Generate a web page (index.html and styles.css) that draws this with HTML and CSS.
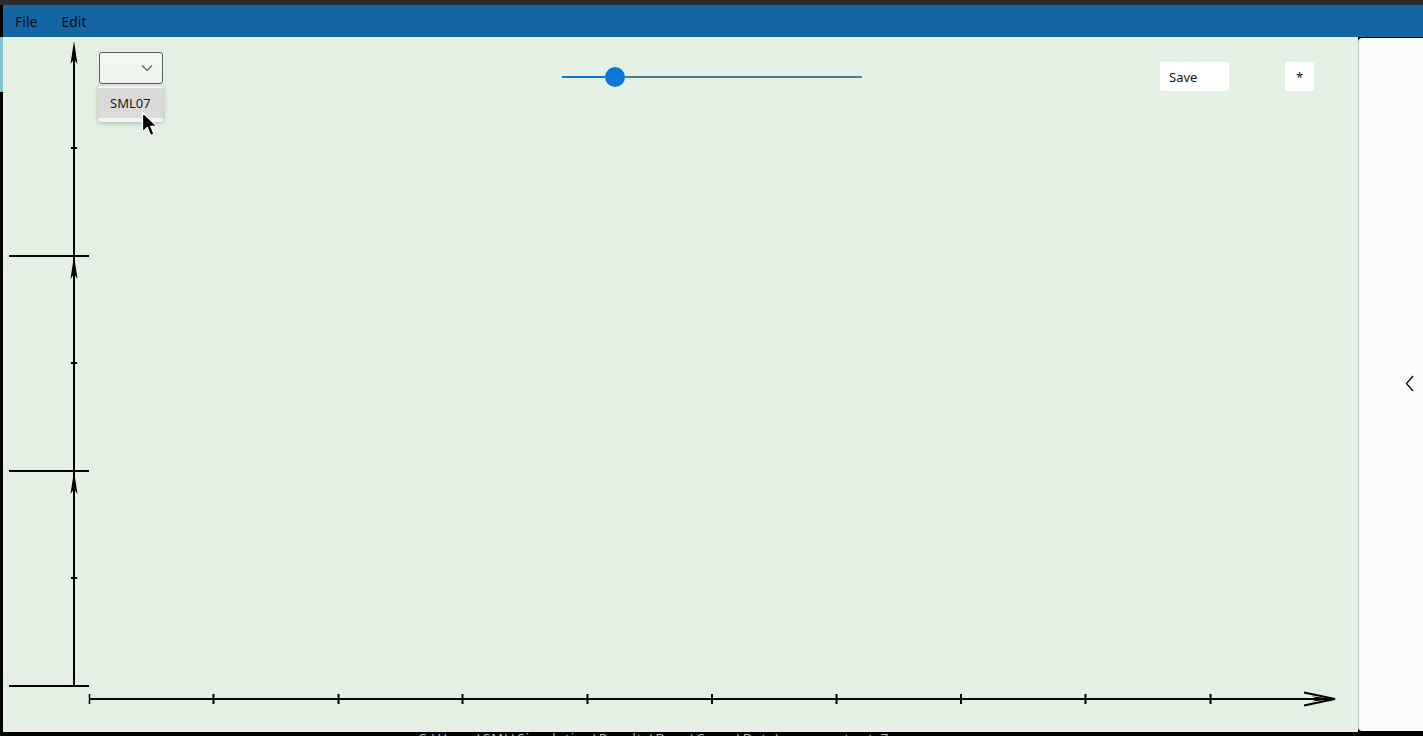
FILE: index.html
```html
<!DOCTYPE html>
<html>
<head>
<meta charset="utf-8">
<link rel="stylesheet" href="styles.css">
</head>
<body>
<div class="topbar"></div>
<div class="menubar">
  <span class="menu-item">File</span>
  <span class="menu-item">Edit</span>
</div>
<div class="main">
  <div class="leftstrip"><div class="leftstrip-hl"></div></div>
  <div class="canvas">
    <svg class="axes" width="1355" height="695" viewBox="3 37 1355 695">
      <g stroke="#000" fill="none">
        <line x1="74" y1="50" x2="74" y2="686" stroke-width="2"/>
        <line x1="9" y1="256" x2="89" y2="256" stroke-width="2"/>
        <line x1="9" y1="471" x2="89" y2="471" stroke-width="2"/>
        <line x1="9" y1="686" x2="89" y2="686" stroke-width="2"/>
        <line x1="71" y1="148" x2="77" y2="148" stroke-width="2"/>
        <line x1="71" y1="363" x2="77" y2="363" stroke-width="2"/>
        <line x1="71" y1="578" x2="77" y2="578" stroke-width="2"/>
        <line x1="89" y1="699" x2="1330" y2="699" stroke-width="2"/>
        <line x1="89.5" y1="694" x2="89.5" y2="704" stroke-width="1.5"/>
        <line x1="213.5" y1="694" x2="213.5" y2="704" stroke-width="2"/>
        <line x1="338.5" y1="694" x2="338.5" y2="704" stroke-width="2"/>
        <line x1="462.5" y1="694" x2="462.5" y2="704" stroke-width="2"/>
        <line x1="587.5" y1="694" x2="587.5" y2="704" stroke-width="2"/>
        <line x1="712" y1="694" x2="712" y2="704" stroke-width="2"/>
        <line x1="836.5" y1="694" x2="836.5" y2="704" stroke-width="2"/>
        <line x1="961" y1="694" x2="961" y2="704" stroke-width="2"/>
        <line x1="1085.5" y1="694" x2="1085.5" y2="704" stroke-width="2"/>
        <line x1="1210.5" y1="694" x2="1210.5" y2="704" stroke-width="2"/>
        <polyline points="1304,692.5 1335,699 1304,705.5" stroke-width="2"/>
      </g>
      <g fill="#000">
        <polygon points="74,41 77.5,64 74,59 70.5,64"/>
        <polygon points="74,256 77.5,279 74,274 70.5,279"/>
        <polygon points="74,471 77.5,494 74,489 70.5,494"/>
        <polygon points="1335,699 1312,696.5 1318,699 1312,701.5"/>
      </g>
    </svg>

    <div class="combo">
      <svg class="chev" width="12" height="8" viewBox="0 0 12 8"><polyline points="1,1.5 6,6.5 11,1.5" fill="none" stroke="#555" stroke-width="1.1"/></svg>
    </div>
    <div class="popup">
      <div class="popup-item">SML07</div>
    </div>
    <svg class="cursor" width="18" height="28" viewBox="0 0 18 28">
      <path d="M1.5,1.5 L1.5,21 L6.3,16.5 L9.6,24.5 L13,23 L9.8,15.3 L16,15.3 Z" fill="#000" stroke="#fff" stroke-width="1.3" stroke-linejoin="round"/>
    </svg>

    <div class="slider">
      <div class="slider-fill"></div>
      <div class="slider-thumb"></div>
      <div class="slider-rest"></div>
    </div>

    <button class="btn btn-save">Save</button>
    <button class="btn btn-star">*</button>
  </div>
  <div class="side">
    <svg class="side-chev" width="10" height="18" viewBox="0 0 10 18"><polyline points="8,1 1.5,8.5 8,16" fill="none" stroke="#000" stroke-width="1.2"/></svg>
  </div>
</div>
<div class="bottombar"><span class="bottom-text">C:\Users\SML\Simulation\Results\Dose\Curve\Data\curve_output_7.csv</span></div>
</body>
</html>
```
FILE: styles.css
```css
html, body {
  margin: 0;
  padding: 0;
  background: #000;
  width: 1423px;
  height: 736px;
  overflow: hidden;
  font-family: "Noto Sans", "DejaVu Sans", sans-serif;
}
.topbar {
  height: 5px;
  background: #2c2c2c;
}
.menubar {
  height: 32px;
  margin-left: 3px;
  background: #1565a2;
  display: flex;
  align-items: center;
  padding-left: 12px;
  padding-top: 2px;
  box-sizing: border-box;
}
.menu-item {
  font-size: 14px;
  color: #0c0c0c;
  margin-right: 24px;
  line-height: 1;
}
.main {
  display: flex;
  height: 695px;
}
.leftstrip {
  width: 3px;
  background: #000;
  flex: none;
}
.leftstrip-hl {
  height: 55px;
  background: #86c2d6;
}
.canvas {
  position: relative;
  width: 1355px;
  flex: none;
  background: #e5f0e4;
  overflow: hidden;
}
.axes {
  position: absolute;
  left: 0;
  top: 0;
  display: block;
}
.combo {
  position: absolute;
  left: 96px;
  top: 15px;
  width: 62px;
  height: 30px;
  border: 1px solid #5d5d5d;
  border-radius: 3px;
  background: linear-gradient(#f5f8f4, #eef3ed);
}
.chev {
  position: absolute;
  right: 9px;
  top: 11px;
}
.popup {
  position: absolute;
  left: 95px;
  top: 49px;
  width: 65px;
  height: 36px;
  background: #f4f4f4;
  border-radius: 3px;
  box-shadow: 0 1px 5px rgba(0,0,0,0.25);
  box-sizing: border-box;
  padding: 2px 0 4px;
}
.popup-item {
  height: 30px;
  background: #dadada;
  font-size: 13px;
  color: #1a1a1a;
  display: flex;
  align-items: center;
  padding-left: 12px;
}
.cursor {
  position: absolute;
  left: 138px;
  top: 74px;
}
.slider {
  position: absolute;
  left: 559px;
  top: 30px;
  width: 300px;
  height: 20px;
  display: flex;
  align-items: center;
}
.slider-fill {
  width: 43px;
  height: 2px;
  background: #0a78d6;
}
.slider-thumb {
  width: 20px;
  height: 20px;
  border-radius: 50%;
  background: #0a78d6;
  flex: none;
}
.slider-rest {
  flex: 1;
  height: 2px;
  background: #477e98;
}
.btn {
  position: absolute;
  top: 25px;
  height: 29px;
  border: none;
  background: #fff;
  border-radius: 3px;
  font-family: "Noto Sans", "DejaVu Sans", sans-serif;
  font-size: 13px;
  color: #111;
  padding: 0;
}
.btn-save {
  left: 1157px;
  width: 69px;
  text-align: left;
  padding-left: 9px;
}
.btn-star {
  left: 1282px;
  width: 29px;
  text-align: center;
}
.side {
  flex: 1;
  margin-top: 1px;
  margin-bottom: 1px;
  background: #f9fbf8;
  border-left: 1px solid #c2c6c1;
  border-top-left-radius: 4px;
  border-bottom-left-radius: 4px;
  display: flex;
  align-items: center;
  justify-content: flex-end;
  padding-right: 8px;
}
.side-chev {
  display: block;
  margin-top: -1px;
}
.bottombar {
  height: 4px;
  background: #000;
  overflow: hidden;
  position: relative;
}
.bottom-text {
  position: absolute;
  left: 418px;
  top: -3px;
  font-size: 13px;
  line-height: 18px;
  color: #bdbdbd;
  white-space: nowrap;
  letter-spacing: 1px;
}
```
